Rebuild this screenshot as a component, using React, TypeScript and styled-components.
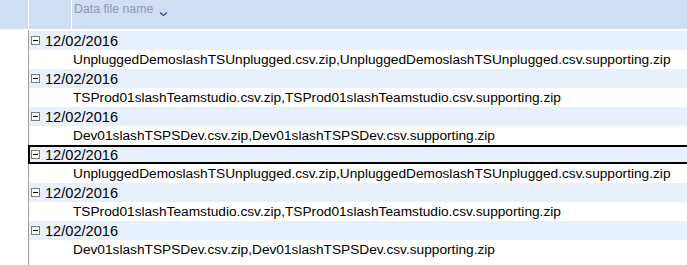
import React from "react";
import styled, { createGlobalStyle } from "styled-components";

const Global = createGlobalStyle`
  html, body { margin: 0; padding: 0; background: #ffffff; }
  body { font-family: "Liberation Sans", Arial, sans-serif; overflow: hidden; }
`;

const groups = [
  { date: "12/02/2016", files: "UnpluggedDemoslashTSUnplugged.csv.zip,UnpluggedDemoslashTSUnplugged.csv.supporting.zip" },
  { date: "12/02/2016", files: "TSProd01slashTeamstudio.csv.zip,TSProd01slashTeamstudio.csv.supporting.zip" },
  { date: "12/02/2016", files: "Dev01slashTSPSDev.csv.zip,Dev01slashTSPSDev.csv.supporting.zip" },
  { date: "12/02/2016", files: "UnpluggedDemoslashTSUnplugged.csv.zip,UnpluggedDemoslashTSUnplugged.csv.supporting.zip", selected: true },
  { date: "12/02/2016", files: "TSProd01slashTeamstudio.csv.zip,TSProd01slashTeamstudio.csv.supporting.zip" },
  { date: "12/02/2016", files: "Dev01slashTSPSDev.csv.zip,Dev01slashTSPSDev.csv.supporting.zip" },
];

const App = () => {
  return (
    <Grid>
      <Global />
      <Header>
        <IndicatorHead />
        <IndentHead />
        <ColumnHead>
          Data file name
          <Chevron width="9" height="6" viewBox="0 0 9 6">
            <path d="M1 1.5 L4.5 4.5 L8 1.5" fill="none" stroke="#2a4a7a" strokeWidth="1.1" />
          </Chevron>
        </ColumnHead>
      </Header>
      <Body>
        <Indicator />
        <Rows>
          {groups.map((g, i) => (
            <React.Fragment key={i}>
              <GroupRow selected={!!g.selected}>
                <Expander>
                  <Minus />
                </Expander>
                <DateText>{g.date}</DateText>
              </GroupRow>
              <DataRow>{g.files}</DataRow>
            </React.Fragment>
          ))}
        </Rows>
      </Body>
    </Grid>
  );
};

export default App;

const Grid = styled.div`
  width: 687px;
  height: 265px;
  display: flex;
  flex-direction: column;
  background: #ffffff;
`;

const Header = styled.div`
  display: flex;
  height: 29px;
  border-bottom: 1px solid #ffffff;
`;

const IndicatorHead = styled.div`
  width: 28px;
  background: #cfdef3;
  border-right: 1px solid #ffffff;
`;

const IndentHead = styled.div`
  width: 42px;
  background: #cfdef3;
  border-right: 1px solid #ffffff;
`;

const ColumnHead = styled.div`
  flex: 1;
  background: #cfdef3;
  color: #8d9bae;
  font-size: 12.3px;
  padding: 2px 0 0 2px;
  display: flex;
  align-items: flex-start;
`;

const Chevron = styled.svg`
  margin: 9px 0 0 6px;
`;

const Body = styled.div`
  flex: 1;
  display: flex;
`;

const Indicator = styled.div`
  width: 28px;
  border-right: 1px solid #a0a0a0;
`;

const Rows = styled.div`
  flex: 1;
  padding-top: 1px;
  display: flex;
  flex-direction: column;
`;

const GroupRow = styled.div<{ selected: boolean }>`
  height: 19px;
  box-sizing: border-box;
  display: flex;
  align-items: center;
  background: #e8f0fc;
  border: ${({ selected }) => (selected ? "2px solid #000000" : "none")};
  border-right: none;
  margin-left: ${({ selected }) => (selected ? "-1px" : "0")};
  padding-left: ${({ selected }) => (selected ? "1px" : "2px")};
`;

const Expander = styled.div`
  width: 9px;
  height: 9px;
  box-sizing: border-box;
  border: 1px solid #7b7b7b;
  background: #ffffff;
  display: flex;
  align-items: center;
  justify-content: center;
`;

const Minus = styled.div`
  width: 5px;
  height: 1px;
  background: #000000;
`;

const DateText = styled.div`
  margin-left: 5px;
  font-size: 14.6px;
  color: #000000;
`;

const DataRow = styled.div`
  height: 19px;
  line-height: 19px;
  padding-left: 44px;
  font-size: 13.7px;
  color: #000000;
  white-space: nowrap;
`;
